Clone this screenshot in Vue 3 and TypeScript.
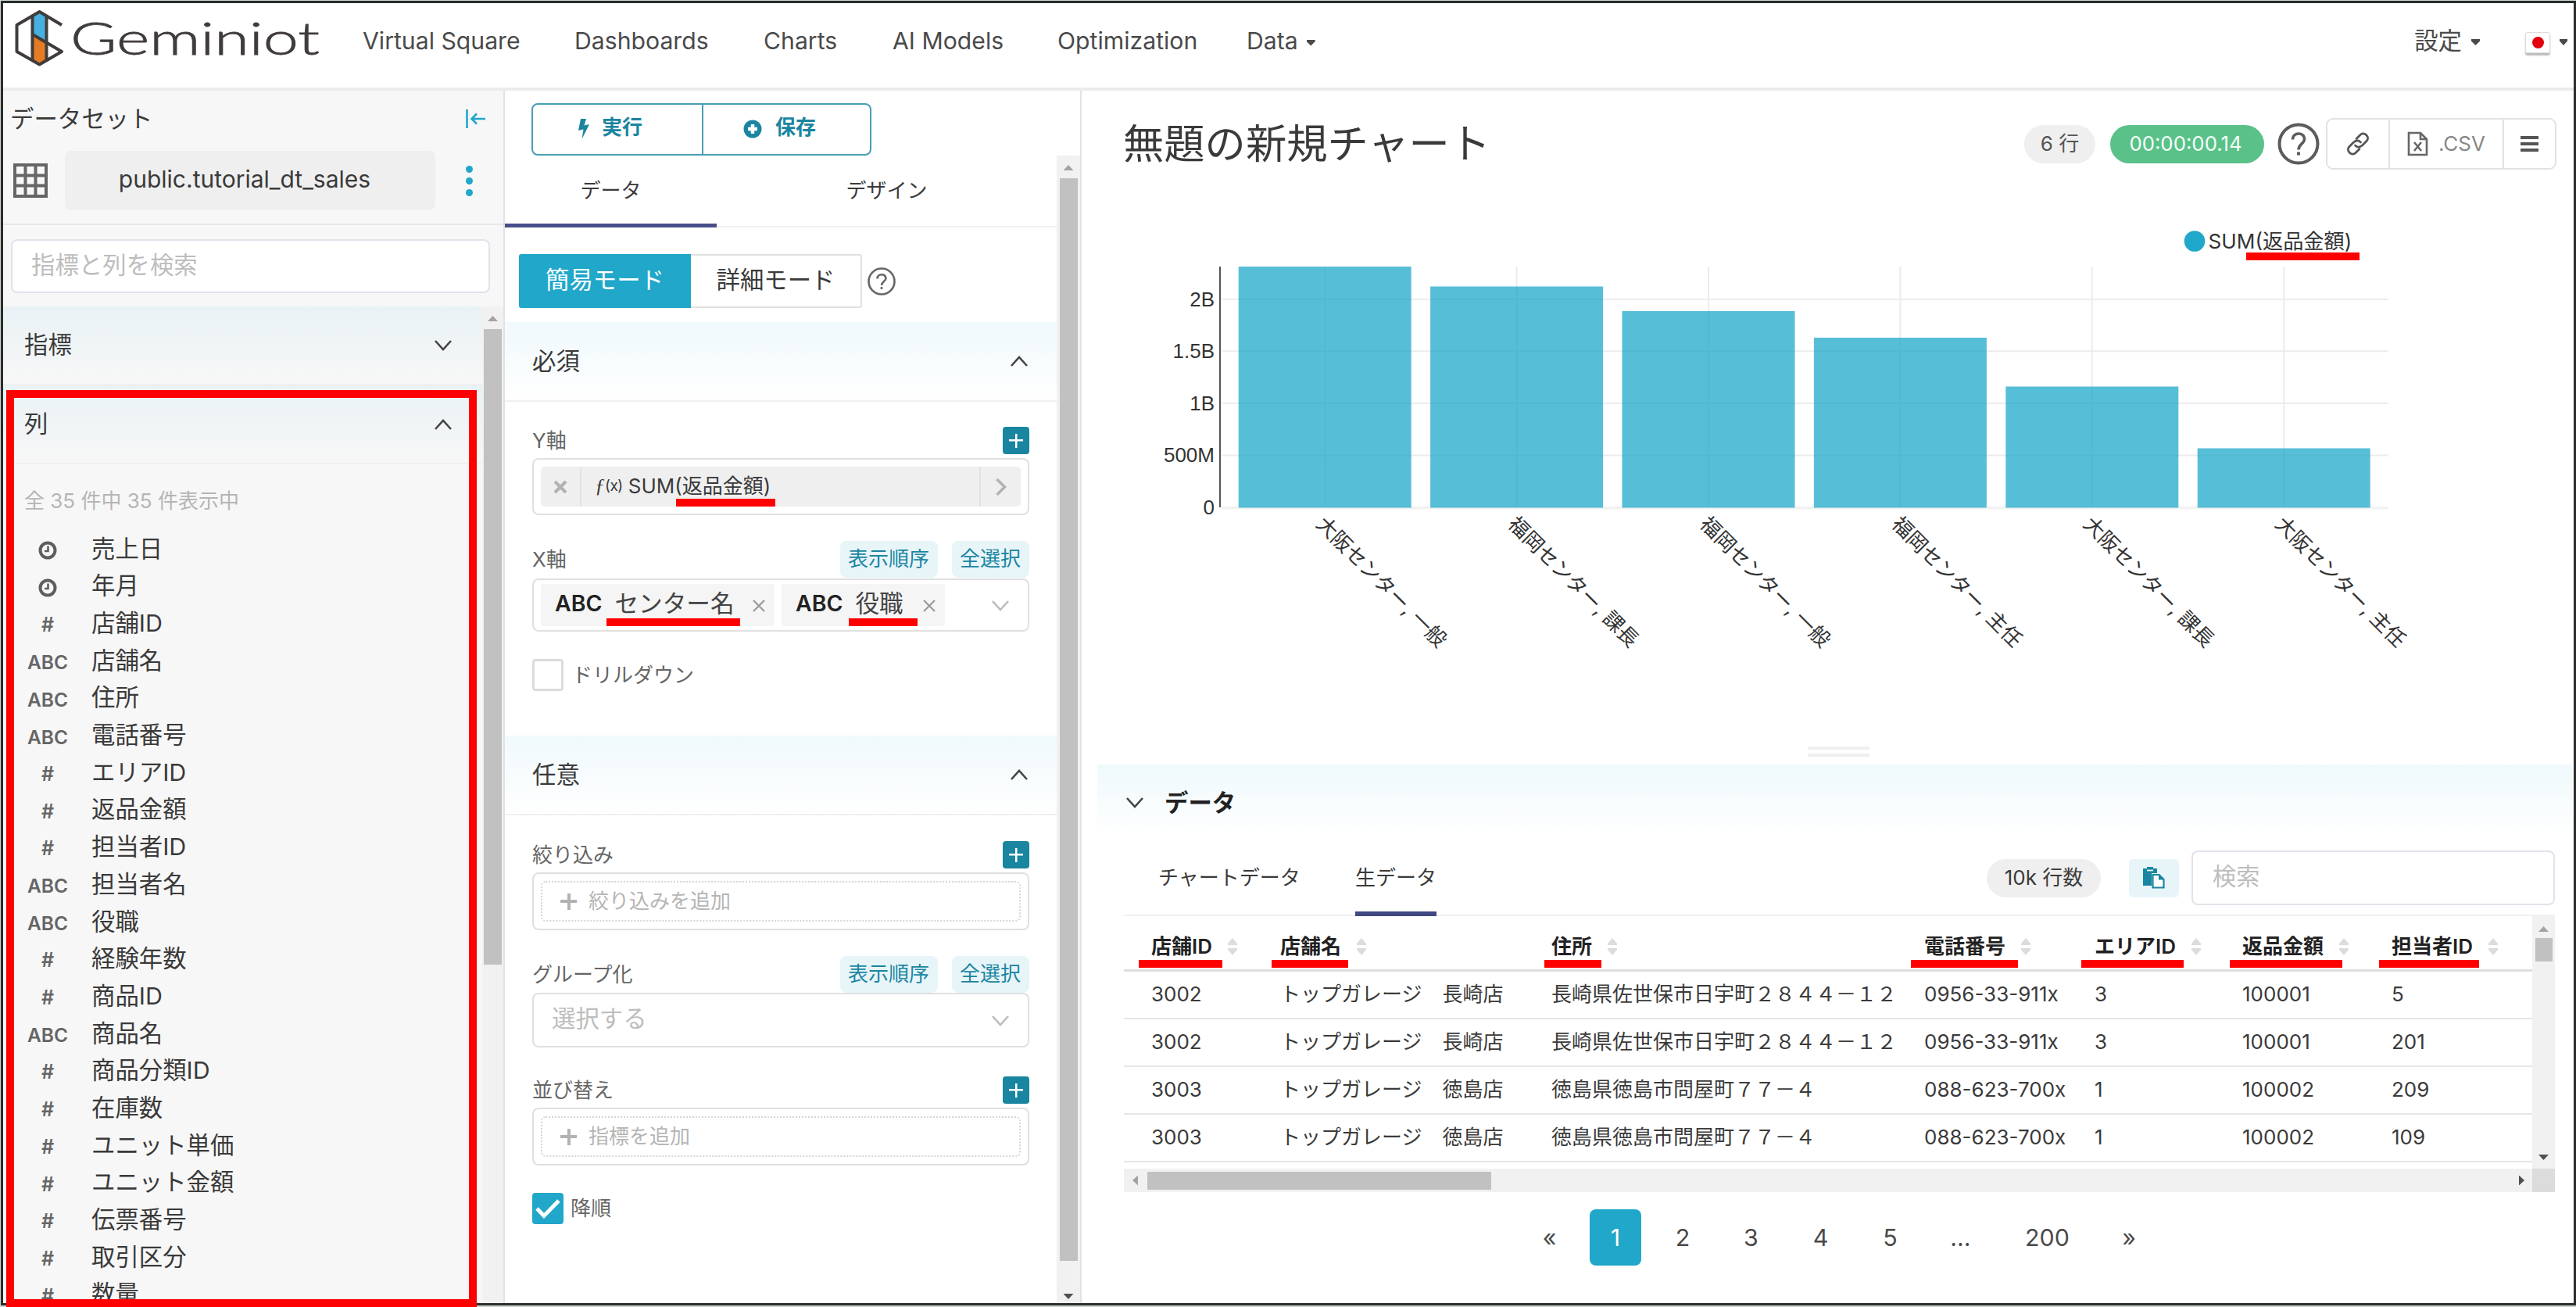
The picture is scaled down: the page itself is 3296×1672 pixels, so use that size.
<script setup lang="ts">
interface NavItem { label: string; width: number; caret?: boolean }
interface Column { kind: 'time' | 'num' | 'str'; name: string }
interface Mark { x: number; y: number; w: number }

const nav: NavItem[] = [
  { label: 'Virtual Square', width: 271 },
  { label: 'Dashboards', width: 242 },
  { label: 'Charts', width: 165 },
  { label: 'AI Models', width: 211 },
  { label: 'Optimization', width: 242 },
  { label: 'Data', width: 120, caret: true },
]

const columns: Column[] = [
  { kind: 'time', name: '売上日' },
  { kind: 'time', name: '年月' },
  { kind: 'num', name: '店舗ID' },
  { kind: 'str', name: '店舗名' },
  { kind: 'str', name: '住所' },
  { kind: 'str', name: '電話番号' },
  { kind: 'num', name: 'エリアID' },
  { kind: 'num', name: '返品金額' },
  { kind: 'num', name: '担当者ID' },
  { kind: 'str', name: '担当者名' },
  { kind: 'str', name: '役職' },
  { kind: 'num', name: '経験年数' },
  { kind: 'num', name: '商品ID' },
  { kind: 'str', name: '商品名' },
  { kind: 'num', name: '商品分類ID' },
  { kind: 'num', name: '在庫数' },
  { kind: 'num', name: 'ユニット単価' },
  { kind: 'num', name: 'ユニット金額' },
  { kind: 'num', name: '伝票番号' },
  { kind: 'num', name: '取引区分' },
  { kind: 'num', name: '数量' },
]

const bars = [
  { label: '大阪センター, 一般', top: 341 },
  { label: '福岡センター, 課長', top: 366.5 },
  { label: '福岡センター, 一般', top: 398 },
  { label: '福岡センター, 主任', top: 432 },
  { label: '大阪センター, 課長', top: 494.5 },
  { label: '大阪センター, 主任', top: 573.5 },
].map((b, i) => ({ ...b, x: 1584.7 + 245.4 * i }))

const ticks = [
  { label: '2B', y: 383 },
  { label: '1.5B', y: 449.3 },
  { label: '1B', y: 516 },
  { label: '500M', y: 582.5 },
  { label: '0', y: 649 },
]

const headers = ['店舗ID', '店舗名', '住所', '電話番号', 'エリアID', '返品金額', '担当者ID']
const rows = [
  ['3002', 'トップガレージ　長崎店', '長崎県佐世保市日宇町２８４４－１２', '0956-33-911x', '3', '100001', '5'],
  ['3002', 'トップガレージ　長崎店', '長崎県佐世保市日宇町２８４４－１２', '0956-33-911x', '3', '100001', '201'],
  ['3003', 'トップガレージ　徳島店', '徳島県徳島市問屋町７７－４', '088-623-700x', '1', '100002', '209'],
  ['3003', 'トップガレージ　徳島店', '徳島県徳島市問屋町７７－４', '088-623-700x', '1', '100002', '109'],
]

const pages = [
  { label: '«', width: 63 },
  { label: '1', width: 66, active: true },
  { label: '2', width: 66 },
  { label: '3', width: 69 },
  { label: '4', width: 69 },
  { label: '5', width: 69 },
  { label: '...', width: 71 },
  { label: '200', width: 111 },
  { label: '»', width: 58 },
]

// Red underlines that call out the fields used in the tutorial
const marks: Mark[] = [
  { x: 2874, y: 323, w: 145 },
  { x: 865, y: 638, w: 127 },
  { x: 776, y: 791, w: 171 },
  { x: 1086, y: 791, w: 88 },
  { x: 1457, y: 1228, w: 107 },
  { x: 1627, y: 1228, w: 98 },
  { x: 1976, y: 1228, w: 73 },
  { x: 2445, y: 1228, w: 137 },
  { x: 2663, y: 1228, w: 131 },
  { x: 2853, y: 1228, w: 144 },
  { x: 3044, y: 1228, w: 128 },
]
</script>

<template>
  <div class="page">
    <div class="frame">
      <header class="topbar">
        <svg class="logo" width="400" height="90" viewBox="14 4 400 90">
          <path d="M42.500 19 50.500 14 59 19V55L42.500 44Z" fill="#46b1e1" />
          <path d="M42.500 44 59 55V78L50.500 83 42.500 78Z" fill="#e57c23" />
          <g fill="none" stroke="#403c3b" stroke-width="4" stroke-linejoin="round">
            <path d="M79 32 50.500 15 21.500 32V66L50.500 82.500 79 66 42.500 44.500" />
            <path d="M41.500 20V77M59.500 20V77" />
          </g>
          <text x="90" y="70" textLength="319" lengthAdjust="spacingAndGlyphs">Geminiot</text>
        </svg>
        <nav class="nav">
          <span v-for="n in nav" :key="n.label" :style="{ width: n.width + 'px' }">
            {{ n.label }}<i v-if="n.caret" class="caret"></i>
          </span>
        </nav>
        <div class="settings">設定<i class="caret"></i></div>
        <div class="flag"><i></i></div>
        <i class="caret last"></i>
      </header>

      <main class="main">
        <aside class="dataset">
          <div class="ds-head">
            <div class="ds-title">
              <span>データセット</span>
              <svg width="26" height="26" viewBox="0 0 26 26" fill="none" stroke="#20a7c9" stroke-width="2.600">
                <path d="M1.500 1V25M25 13H8M14 6.500 7.500 13 14 19.500" />
              </svg>
            </div>
            <div class="ds-row">
              <svg width="44" height="44" viewBox="0 0 44 44" fill="none" stroke="#666" stroke-width="4">
                <path d="M2 2H42V42H2ZM2 15.500H42M2 28.500H42M15.500 2V42M28.500 2V42" />
              </svg>
              <div class="ds-name">public.tutorial_dt_sales</div>
              <div class="dots"><i></i><i></i><i></i></div>
            </div>
          </div>
          <div class="ds-search">指標と列を検索</div>
          <div class="ds-scroll">
            <div class="ds-body">
              <div class="ds-sec">
                <span>指標</span>
                <svg class="chev" width="24" height="16" viewBox="0 0 24 16"><path d="M2 2 12 13 22 2" /></svg>
              </div>
              <div class="ds-sec">
                <span>列</span>
                <svg class="chev" width="24" height="16" viewBox="0 0 24 16"><path d="M2 14 12 3 22 14" /></svg>
              </div>
              <div class="ds-count">全 35 件中 35 件表示中</div>
              <ul class="cols">
                <li v-for="c in columns" :key="c.name">
                  <span class="kind">
                    <svg v-if="c.kind === 'time'" width="24" height="24" viewBox="0 0 24 24" fill="none" stroke="#5e5e5e">
                      <circle cx="12" cy="12" r="9.500" stroke-width="4" />
                      <path d="M12.500 6.500V13H8" stroke-width="2.600" />
                    </svg>
                    <b v-else-if="c.kind === 'num'" class="hash">#</b>
                    <b v-else>ABC</b>
                  </span>
                  <span>{{ c.name }}</span>
                </li>
              </ul>
            </div>
            <div class="vbar left-bar"><i class="up dim"></i><i class="thumb"></i></div>
          </div>
        </aside>

        <section class="controls">
          <div class="btns">
            <button>
              <svg width="15" height="26" viewBox="0 0 15 26"><path d="M4 0H11L8.500 8.500 15 7 5.500 26 7.500 13.500 1 15Z" fill="#1a85a0" /></svg>
              実行
            </button>
            <button>
              <svg width="24" height="24" viewBox="0 0 24 24"><circle cx="12" cy="12" r="11.500" fill="#1a85a0" /><path d="M12 6V18M6 12H18" stroke="#fff" stroke-width="4.500" /></svg>
              保存
            </button>
          </div>
          <div class="ct-scroll">
            <div class="ct-body">
              <div class="tabs"><span class="on">データ</span><span>デザイン</span></div>
              <div class="modes">
                <span class="m1">簡易モード</span><span class="m2">詳細モード</span>
                <svg width="38" height="38" viewBox="0 0 38 38" fill="none" stroke="#666" stroke-width="2.600">
                  <circle cx="19" cy="19" r="16.500" />
                  <path d="M13.500 15.500C13.500 8.500 24.500 8.500 24.500 15C24.500 19 19 19 19 24" /><path d="M19 26V29" />
                </svg>
              </div>

              <div class="sec req">
                <span>必須</span>
                <svg class="chev" width="24" height="16" viewBox="0 0 24 16"><path d="M2 14 12 3 22 14" /></svg>
              </div>
              <div class="lab l-y"><span>Y軸</span><i class="plus"></i></div>
              <div class="box b-y">
                <div class="metric">
                  <span class="mx"><svg width="18" height="18" viewBox="0 0 18 18"><path d="M2 2 16 16M16 2 2 16" stroke="#b2b2b2" stroke-width="4" /></svg></span>
                  <span class="mt"><em>ƒ</em><small>(x)</small>SUM(返品金額)</span>
                  <span class="ma"><svg width="16" height="24" viewBox="0 0 16 24"><path d="M2.500 2 12.500 12 2.500 22" fill="none" stroke="#b2b2b2" stroke-width="3.500" /></svg></span>
                </div>
              </div>
              <div class="lab l-x"><span>X軸</span><em>表示順序</em><em>全選択</em></div>
              <div class="box b-x">
                <span class="tag t1"><b>ABC</b>センター名<svg width="18" height="18" viewBox="0 0 18 18"><path d="M2 2 16 16M16 2 2 16" /></svg></span>
                <span class="tag t2"><b>ABC</b>役職<svg width="18" height="18" viewBox="0 0 18 18"><path d="M2 2 16 16M16 2 2 16" /></svg></span>
                <svg class="chev pale" width="24" height="16" viewBox="0 0 24 16"><path d="M2 2 12 13 22 2" /></svg>
              </div>
              <div class="check c1"><i></i><span>ドリルダウン</span></div>

              <div class="sec opt">
                <span>任意</span>
                <svg class="chev" width="24" height="16" viewBox="0 0 24 16"><path d="M2 14 12 3 22 14" /></svg>
              </div>
              <div class="lab l-f"><span>絞り込み</span><i class="plus"></i></div>
              <div class="box b-f"><div class="drop"><i></i>絞り込みを追加</div></div>
              <div class="lab l-g"><span>グループ化</span><em>表示順序</em><em>全選択</em></div>
              <div class="box b-g">
                <span class="ph">選択する</span>
                <svg class="chev pale" width="24" height="16" viewBox="0 0 24 16"><path d="M2 2 12 13 22 2" /></svg>
              </div>
              <div class="lab l-s"><span>並び替え</span><i class="plus"></i></div>
              <div class="box b-f"><div class="drop"><i></i>指標を追加</div></div>
              <div class="check c2">
                <svg width="40" height="40" viewBox="0 0 40 40"><rect width="40" height="40" rx="4" fill="#20a7c9" /><path d="M6 20 15 29.500 34 10" fill="none" stroke="#fff" stroke-width="5" /></svg>
                <span>降順</span>
              </div>
            </div>
            <div class="vbar mid-bar"><i class="up dim"></i><i class="thumb"></i><i class="down"></i></div>
          </div>
        </section>

        <section class="view">
          <div class="v-head">
            <h1>無題の新規チャート</h1>
            <span class="pill rowsn">6 行</span>
            <span class="pill time">00:00:00.14</span>
            <svg class="help" width="54" height="54" viewBox="0 0 54 54" fill="none" stroke="#5c5c5c" stroke-width="4">
              <circle cx="27" cy="27" r="24.500" />
              <path d="M19.500 21.500C19.500 11.500 34.500 11.500 34.500 21C34.500 27 27 27 27 34.500" stroke-width="3.500" /><path d="M27 37.500V41.500" stroke-width="4" />
            </svg>
            <div class="tools">
              <span class="a-link">
                <svg width="30" height="30" viewBox="0 0 30 30" fill="none" stroke="#555" stroke-width="2.800" stroke-linecap="round">
                  <path d="M13 8.500 18 3.500C23-1.500 31 6.500 26 11.500L20.500 17C17 20 13.500 19.500 11.500 17" />
                  <path d="M17 21.500 12 26.500C7 31.500-1 23.500 4 18.500L9.500 13C13 10 16.500 10.500 18.500 13" />
                </svg>
              </span>
              <span class="a-csv">
                <svg width="27" height="32" viewBox="0 0 27 32" fill="none" stroke="#666" stroke-width="2.600">
                  <path d="M2 2H17L25 10V30H2ZM17 2V10H25M9 14 18 25M18 14 9 25" />
                </svg>.CSV
              </span>
              <span class="a-menu"><i></i><i></i><i></i></span>
            </div>
          </div>

          <svg class="chart" width="1909" height="698" viewBox="1384 252 1909 698">
            <circle cx="2808" cy="308.500" r="13.300" fill="#1fa8c9" />
            <text x="2825.500" y="318">SUM(返品金額)</text>
            <g stroke="#ececec" stroke-width="2">
              <path v-for="t in ticks" :key="t.label" :d="`M1564 ${t.y}H3055.500`" />
              <path v-for="b in bars" :key="b.x" :d="`M${b.x + 110.500} 341V649`" />
            </g>
            <path d="M1563 650H3055.500" stroke="#f2f2f2" stroke-width="3" />
            <rect v-for="b in bars" :key="b.x" :x="b.x" :y="b.top" width="221" :height="649.500 - b.top" fill="#1fa8c9" fill-opacity="0.750" />
            <path d="M1561 341V649" stroke="#555" stroke-width="2" />
            <text v-for="t in ticks" :key="t.label" x="1554" :y="t.y + 8.500" text-anchor="end" class="axis">{{ t.label }}</text>
            <text v-for="b in bars" :key="b.x" :transform="`translate(${b.x + 98} 672) rotate(45)`" class="xl">{{ b.label }}</text>
          </svg>
          <div class="handle"><i></i><i></i></div>

          <div class="d-head">
            <svg class="chev" width="24" height="16" viewBox="0 0 24 16"><path d="M2 2 12 13 22 2" /></svg>
            <b>データ</b>
          </div>
          <div class="d-tabs">
            <span class="dt1">チャートデータ</span>
            <span class="dt2">生データ</span>
            <span class="pill count">10k 行数</span>
            <span class="copy">
              <svg width="28" height="28" viewBox="0 0 28 28">
                <path d="M0 2H5V0H13V2H18V8H11V24H0Z" fill="#1a85a0" />
                <path d="M5 4.500H13" stroke="#e7f5f9" stroke-width="1.800" />
                <path d="M12.500 10H20.500L26.500 16V26.500H12.500Z" fill="#fff" stroke="#1a85a0" stroke-width="2.200" />
                <path d="M20 10V16.500H26.500Z" fill="#1a85a0" />
              </svg>
            </span>
            <span class="find">検索</span>
          </div>
          <div class="t-wrap">
            <div class="table">
              <div class="tr th">
                <span v-for="h in headers" :key="h">{{ h }}
                  <svg width="12" height="22" viewBox="0 0 12 22"><path d="M6 0 12 7V9H0V7ZM6 22 12 15V13H0V15Z" fill="#dcdcdc" /></svg>
                </span>
              </div>
              <div v-for="(r, i) in rows" :key="i" class="tr">
                <span v-for="(c, j) in r" :key="j">{{ c }}</span>
              </div>
            </div>
            <div class="vbar tbl-bar"><i class="up dim"></i><i class="thumb"></i><i class="down"></i></div>
          </div>
          <div class="hbar"><i class="lt"></i><i class="hthumb"></i><i class="rt"></i><i class="corner"></i></div>
          <div class="pager">
            <span v-for="p in pages" :key="p.label" :class="{ on: p.active }" :style="{ width: p.width + 'px' }">{{ p.label }}</span>
          </div>
        </section>
      </main>
    </div>
    <div class="redbox"></div>
    <i v-for="m in marks" :key="m.x" class="mark" :style="{ left: m.x + 'px', top: m.y + 'px', width: m.w + 'px' }"></i>
  </div>
</template>

<style>
body { margin: 0; }
</style>

<style scoped>
* { box-sizing: border-box; }
i, em { font-style: normal; display: block; }
.page {
  position: relative; width: 3296px; height: 1672px; padding: 1px 0 2px 1px; overflow: hidden;
  background: #cdd3cf; color: #3a3a3a; white-space: nowrap;
  font: 400 30.400px/1 "Inter", "Noto Sans CJK JP", sans-serif;
}
.frame { height: 1669px; border: 3px solid #2b2e2c; background: #fff; overflow: hidden; }

.topbar { display: flex; height: 112px; border-bottom: 4px solid #ececec; padding-left: 10px; }
.logo { flex: none; }
.logo text { font: 300 58px "Lato", sans-serif; fill: #403c3b; stroke: #403c3b; stroke-width: 0.800px; }
.nav { display: flex; height: 97px; margin-left: 50px; color: #4a4a4a; font-size: 30.200px; }
.nav span, .settings { display: flex; align-items: center; }
.caret { width: 11px; height: 8px; background: #4a4a4a; clip-path: polygon(0 0, 100% 0, 100% 30%, 50% 100%, 0 30%); }
.nav .caret { margin-left: 11px; margin-top: 4px; }
.settings { margin-left: auto; height: 96px; color: #4a4a4a; }
.settings .caret { margin-left: 12px; margin-top: 4px; }
.flag { width: 32px; height: 27px; margin: 37px 12px 0 58px; border: 1px solid #ddd; border-radius: 3px; box-shadow: 0 3px 2px #bbb; display: flex; align-items: center; justify-content: center; }
.flag i { width: 15px; height: 15px; border-radius: 50%; background: #e2000f; }
.last { margin: 46px 8px 0 0; width: 10px; }

.main { display: flex; height: 1551px; }
.dataset { width: 642px; flex: none; background: #f7f7f7; border-right: 2px solid #e2e2e2; }
.ds-head { height: 172px; border-bottom: 2px solid #e8e8e8; }
.ds-title { display: flex; align-items: center; height: 72px; padding: 0 22px 0 9px; justify-content: space-between; }
.ds-row { display: flex; align-items: center; height: 76px; margin-top: 5px; padding-left: 13px; }
.ds-name { width: 474px; height: 76px; margin-left: 22px; padding-right: 14px; border-radius: 8px; background: #efefef; line-height: 73px; text-align: center; font-size: 30px; }
.dots { display: flex; flex-direction: column; gap: 6px; margin-left: 39px; }
.dots i { width: 9px; height: 9px; border-radius: 50%; background: #20a7c9; }
.ds-search { width: 613px; height: 69px; margin: 18px 0 17px 10px; padding-left: 24px; border: 2px solid #e2e2ec; border-radius: 8px; background: #fff; color: #bdbdbd; line-height: 63px; }
.ds-scroll { display: flex; height: 1275px; overflow: hidden; }
.ds-body { width: 613px; }
.ds-sec { display: flex; align-items: center; justify-content: space-between; height: 101px; padding: 0 38px 0 27px; background: linear-gradient(#e9f2f5, #f7f7f7); border-bottom: 2px solid #f0f0f0; }
.chev { fill: none; stroke: #444; stroke-width: 2.600; }
.chev.pale { stroke: #bdbdbd; }
.ds-count { margin-top: 32px; padding-left: 27px; height: 30px; line-height: 30px; font-size: 26px; color: #b5b5b5; }
.cols { list-style: none; margin: 22px 0 0; padding: 0; }
.cols li { display: flex; align-items: center; height: 47.700px; }
.kind { width: 114px; height: 48px; display: flex; align-items: center; justify-content: center; padding-top: 5px; margin-right: -1px; }
.kind b { font-weight: 600; font-size: 24.500px; color: #666; }
.kind .hash { font-size: 25px; }

.vbar { display: flex; flex-direction: column; align-items: center; background: #f1f1f1; flex: none; }
.vbar .thumb { background: #c1c1c1; }
.up, .down { width: 13px; height: 7px; background: #505050; }
.up { clip-path: polygon(50% 0, 100% 100%, 0 100%); }
.down { clip-path: polygon(0 0, 100% 0, 50% 100%); }
.dim { background: #a3a3a3; }
.left-bar { width: 27px; }
.left-bar .up { margin: 12px 0 10px; }
.left-bar .thumb { width: 23px; height: 813px; }

.controls { width: 738px; flex: none; border-right: 2px solid #e2e2e2; background: #fff; }
.btns { display: flex; width: 435px; height: 67px; margin: 16px 0 0 34px; border: 2px solid #479fb4; border-radius: 8px; overflow: hidden; }
.btns button { display: flex; align-items: center; padding: 0 0 6px; border: 0; background: none; color: #1a85a0; font: 600 26px/1 "Inter", "Noto Sans CJK JP", sans-serif; }
.btns button:first-child { width: 218px; padding-left: 57px; gap: 16px; border-right: 2px solid #479fb4; }
.btns button:last-child { padding-left: 51px; gap: 17px; }
.btns svg { margin-top: 4px; }
.ct-scroll { display: flex; height: 1468px; }
.ct-body { width: 706px; }
.tabs { display: flex; height: 92px; border-bottom: 2px solid #f0f0f0; font-size: 26px; line-height: 90px; text-align: center; }
.tabs span { width: 435px; height: 92px; }
.tabs .on { width: 271px; border-bottom: 5px solid #484f88; }
.modes { display: flex; align-items: center; height: 69px; margin: 34px 0 18px 18px; line-height: 63px; text-align: center; }
.m1 { width: 220px; height: 69px; background: #20a7c9; color: #fff; border-radius: 3px 0 0 3px; line-height: 67px; }
.m2 { width: 219px; height: 69px; border: 2px solid #e0e0e0; border-left: 0; border-radius: 0 3px 3px 0; }
.modes svg { margin-left: 6px; }
.sec { display: flex; align-items: center; justify-content: space-between; height: 102px; padding: 0 36px 0 35px; background: linear-gradient(#f0f9fc, #fff); border-bottom: 2px solid #f0f0f0; }
.lab { display: flex; align-items: center; margin: 32px 35px 0 35px; height: 35px; font-size: 26px; color: #666; }
.lab span { margin-right: auto; }
.lab em { height: 47px; padding: 0 11px 0 10px; border-radius: 8px; background: #e7f5f9; color: #1a85a0; line-height: 46px; font-size: 26px; margin-left: 18px; }
.plus { width: 34px; height: 35px; border-radius: 4px; background: linear-gradient(#fff, #fff) center/18px 2.500px no-repeat, linear-gradient(#fff, #fff) center/2.500px 18px no-repeat, #1a85a0; }
.l-x, .l-g { height: 47px; margin-top: 33px; }
.l-f { margin-top: 33px; }
.l-s { margin-top: 37px; }
.box { display: flex; align-items: center; margin: 4px 35px 0 35px; border: 2px solid #e0e0e0; border-radius: 8px; padding: 0 9px; }
.b-y { height: 73px; margin-top: 5px; }
.metric { display: flex; width: 614px; height: 51px; background: #efefef; border-radius: 5px; line-height: 49px; font-size: 26px; }
.mx { width: 52px; border-right: 2px solid #e2e2e2; display: flex; align-items: center; justify-content: center; }
.mt { flex: 1; display: flex; padding-left: 17px; }
.mt em { font: italic 26px/49px "Liberation Serif", serif; }
.mt small { font-size: 19px; margin-right: 7px; letter-spacing: -0.500px; }
.ma { width: 53px; border-left: 2px solid #e2e2e2; display: flex; align-items: center; justify-content: center; }
.b-x { height: 68px; margin-top: 1px; }
.tag { display: flex; align-items: center; height: 54px; background: #f5f5f5; border-radius: 4px; margin-right: 9px; padding: 0 11px 4px 18px; color: #444; font-size: 30.600px; }
.tag b { font-weight: 600; font-size: 28.500px; color: #222; margin-right: 16px; }
.tag svg { margin-left: auto; margin-top: 6px; fill: none; stroke: #9a9a9a; stroke-width: 2.200; }
.t1 { width: 299px; }
.t2 { width: 209px; }
.box .chev { margin-left: auto; margin-right: 14px; margin-top: 2px; }
.check { display: flex; align-items: center; margin: 35px 0 0 35px; height: 40px; font-size: 26px; color: #666; }
.c1 { height: 41px; margin-bottom: 57px; }
.check i { width: 40px; height: 41px; border: 3px solid #dcdcdc; border-radius: 4px; margin-right: 11px; }
.check svg { margin-right: 9px; }
.b-f { height: 74px; margin-top: 5px; }
.drop { display: flex; align-items: center; width: 614px; height: 52px; border: 2px dotted #d6d6d6; border-radius: 6px; font-size: 26px; color: #b5b5b5; padding-left: 23px; }
.drop i { width: 21px; height: 21px; margin-right: 15px; background: linear-gradient(#b2b2b2, #b2b2b2) center/21px 4px no-repeat, linear-gradient(#b2b2b2, #b2b2b2) center/4px 21px no-repeat; }
.b-g { height: 70px; margin-top: 0; }
.ph { color: #bdbdbd; padding: 0 0 3px 14px; }
.mid-bar { width: 30px; }
.mid-bar .up { margin: 12px 0 10px; }
.mid-bar .thumb { width: 23px; height: 1385px; }
.mid-bar .down { margin-top: 42px; }

.view { width: 1909px; background: #fff; }
.v-head { display: flex; align-items: center; height: 136px; padding: 0 22px 0 53px; }
h1 { margin: 0 auto 0 0; font-weight: 400; font-size: 52.300px; line-height: 60px; }
.pill { display: flex; align-items: center; justify-content: center; height: 49px; border-radius: 25px; background: #efefef; font-size: 26px; }
.rowsn { width: 91px; color: #555; }
.time { width: 197px; margin: 0 17px 0 19px; padding-right: 4px; background: #5ac189; color: #f4fff8; font-size: 25.800px; }
.tools { display: flex; width: 295px; height: 66px; margin-left: 8px; border: 2px solid #e2e2e2; border-radius: 9px; color: #888; font-size: 26px; }
.tools span { display: flex; align-items: center; justify-content: center; }
.a-link { width: 80px; border-right: 2px solid #e2e2e2; }
.a-csv { width: 146px; border-right: 2px solid #e2e2e2; gap: 13px; }
.tools .a-menu { flex: 1; flex-direction: column; gap: 4px; }
.a-menu i { width: 23px; height: 4px; background: #555; }
.chart { display: block; }
.chart text { font: 26.200px "Inter", "Noto Sans CJK JP", sans-serif; fill: #333; }
.chart .axis { font: 26px "Liberation Sans", sans-serif; }
.chart .xl { font-size: 26px; }
.handle { height: 28px; padding: 5px 0 0 929px; }
.handle i { width: 79px; height: 4px; background: #efefef; margin-bottom: 5px; }
.d-head { display: flex; align-items: center; gap: 26px; height: 98px; margin: 0 2px 0 20px; padding-left: 36px; background: linear-gradient(#eff9fc, #fff 92%); color: #222; }
.d-head b { font-weight: 700; }
.d-tabs { display: flex; align-items: center; width: 1831px; height: 96px; margin-left: 54px; border-bottom: 2px solid #f0f0f0; font-size: 26px; }
.dt1 { margin-left: 44px; width: 252px; }
.dt2 { width: 104px; height: 97px; line-height: 96px; border-bottom: 6px solid #3f4883; margin-right: auto; }
.count { width: 146px; }
.copy { display: flex; align-items: center; justify-content: center; width: 64px; height: 49px; margin: 0 16px 0 36px; border-radius: 6px; background: #e7f5f9; }
.find { width: 465px; height: 70px; border: 2px solid #e2e2ec; border-radius: 8px; padding-left: 25px; font-size: 30.200px; line-height: 63px; color: #bdbdbd; }
.t-wrap { display: flex; height: 323px; margin-left: 54px; }
.table { width: 1802px; }
.tr { display: grid; grid-template-columns: 165px 347px 477px 218px 189px 191px 1fr; height: 61.100px; padding-left: 35px; padding-bottom: 1px; border-bottom: 2px solid #e6e6e6; font-size: 26px; align-items: center; }
.th { height: 71px; padding-top: 10px; border-bottom: 3px solid #dedede; font-weight: 600; color: #222; }
.th span { display: flex; align-items: center; gap: 20px; }
.tbl-bar { width: 29px; }
.tbl-bar .up { margin: 13px 0 8px; }
.tbl-bar .thumb { width: 22px; height: 30px; }
.tbl-bar .down { margin-top: 247px; }
.hbar { display: flex; align-items: center; width: 1831px; height: 30px; margin-left: 54px; background: #f1f1f1; }
.lt, .rt { width: 7px; height: 13px; background: #505050; clip-path: polygon(0 0, 100% 50%, 0 100%); }
.lt { background: #a3a3a3; clip-path: polygon(100% 0, 100% 100%, 0 50%); margin: 0 12px 0 11px; }
.hthumb { width: 440px; height: 23px; background: #c1c1c1; }
.rt { margin-left: auto; margin-right: 10px; }
.corner { width: 29px; height: 30px; background: #dcdcdc; }
.pager { display: flex; gap: 20px; margin: 22px 0 0 567px; height: 72px; line-height: 72px; text-align: center; color: #4a4a4a; }
.pager .on { background: #20a7c9; color: #fff; border-radius: 8px; }

.redbox { position: absolute; left: 8px; top: 499px; width: 602px; height: 1173px; border: 10px solid #f00; }
.mark { position: absolute; height: 10px; background: #f00; }
</style>
